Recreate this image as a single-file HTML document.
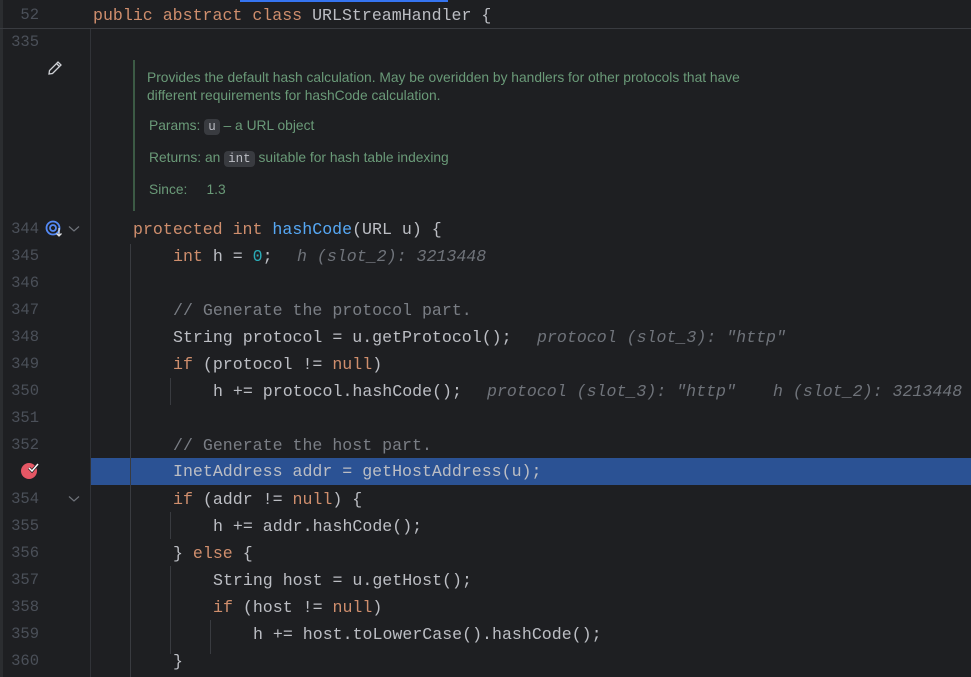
<!DOCTYPE html>
<html><head><meta charset="utf-8"><style>
body{margin:0;width:971px;height:677px;background:#1e1f22;overflow:hidden;position:relative;font-family:"Liberation Mono",monospace;}
.l{position:absolute;left:0;width:971px;height:27px;line-height:27px;font-size:16.6px;color:#bcbec4;white-space:pre;}
.n{position:absolute;left:0;width:39px;text-align:right;color:#4b5059;font-size:15.5px;}
.c{position:absolute;left:93px;}
.k{color:#cf8e6d}.f{color:#56a8f5}.num{color:#2aacb8}.cm{color:#7a7e85}
.h{position:absolute;font-style:italic;color:#6f737a;}
.g{position:absolute;width:1px;background:#393b40;}
.doc{position:absolute;left:147px;font-family:"Liberation Sans",sans-serif;font-size:13.8px;color:#6a9a78;white-space:nowrap;}
.tag{background:#393b40;color:#bcbec4;border-radius:4px;padding:1px 4px;font-family:"Liberation Mono",monospace;font-size:12.5px;}
</style></head><body>
<div style="position:absolute;left:0;top:0;width:3px;height:677px;background:#2b2d30"></div>
<div style="position:absolute;left:90px;top:29px;width:1px;height:648px;background:#313338"></div>
<div style="position:absolute;left:240px;top:0;width:208px;height:2px;background:#3574f0"></div>
<div class="l" style="top:2px;"><span class="n">52</span><span class="c"><span class="k">public abstract class</span> URLStreamHandler {</span></div>
<div style="position:absolute;left:0;top:28px;width:971px;height:1px;background:#393b40"></div>
<div class="l" style="top:29px;"><span class="n">335</span></div>
<svg style="position:absolute;left:46px;top:59px" width="18" height="18" viewBox="0 0 18 18"><path d="M3 15 L3.5 11.5 L12 3 L15 6 L6.5 14.5 Z M10.5 4.5 L13.5 7.5" fill="none" stroke="#cfd1d6" stroke-width="1.3"/></svg>
<div style="position:absolute;left:133px;top:60px;width:2px;height:151px;background:#3c5a45"></div>
<div class="doc" style="top:69px;line-height:18px;">Provides the default hash calculation. May be overidden by handlers for other protocols that have<br>different requirements for hashCode calculation.</div>
<div class="doc" style="top:118px;left:149px">Params: <span class="tag">u</span> – a URL object</div>
<div class="doc" style="top:150px;left:149px">Returns: an <span class="tag">int</span> suitable for hash table indexing</div>
<div class="doc" style="top:182px;left:149px">Since: &nbsp;&nbsp;&nbsp;&nbsp;1.3</div>
<div style="position:absolute;left:91px;top:458px;width:880px;height:27px;background:#2b5294"></div>
<div class="g" style="left:130px;top:244px;height:433px"></div>
<div class="g" style="left:170px;top:378px;height:27px"></div>
<div class="g" style="left:170px;top:512px;height:27px"></div>
<div class="g" style="left:170px;top:566px;height:88px"></div>
<div class="g" style="left:210px;top:620px;height:34px"></div>
<svg style="position:absolute;left:45px;top:220px" width="22" height="18" viewBox="0 0 22 18"><circle cx="8" cy="8" r="6.5" fill="none" stroke="#548af7" stroke-width="1.8"/><circle cx="8" cy="8" r="3" fill="none" stroke="#548af7" stroke-width="1.8"/><path d="M14 8 V16 M11.5 13.5 L14 16 L16.5 13.5" fill="none" stroke="#dfe1e5" stroke-width="1.3"/></svg>
<svg style="position:absolute;left:68px;top:225px" width="12" height="8"><path d="M1 1.5 L6 6 L11 1.5" fill="none" stroke="#6f737a" stroke-width="1.2"/></svg>
<svg style="position:absolute;left:68px;top:495px" width="12" height="8"><path d="M1 1.5 L6 6 L11 1.5" fill="none" stroke="#6f737a" stroke-width="1.2"/></svg>
<svg style="position:absolute;left:20px;top:461px" width="20" height="20"><circle cx="9" cy="10" r="8" fill="#e55765"/><path d="M9 7 L12 10 L18 3" fill="none" stroke="#1e1f22" stroke-width="3"/><path d="M9 7 L12 10 L18 3" fill="none" stroke="#fff" stroke-width="1.5"/></svg>
<div class="l" style="top:216px"><span class="n">344</span><span class="c" style="left:133px"><span class="k">protected int</span> <span class="f">hashCode</span>(URL u) {</span></div>
<div class="l" style="top:243px"><span class="n">345</span><span class="c" style="left:173px"><span class="k">int</span> h = <span class="num">0</span>;</span><span class="h" style="left:297px">h (slot_2): 3213448</span></div>
<div class="l" style="top:270px"><span class="n">346</span></div>
<div class="l" style="top:297px"><span class="n">347</span><span class="c cm" style="left:173px">// Generate the protocol part.</span></div>
<div class="l" style="top:324px"><span class="n">348</span><span class="c" style="left:173px">String protocol = u.getProtocol();</span><span class="h" style="left:537px">protocol (slot_3): "http"</span></div>
<div class="l" style="top:351px"><span class="n">349</span><span class="c" style="left:173px"><span class="k">if</span> (protocol != <span class="k">null</span>)</span></div>
<div class="l" style="top:378px"><span class="n">350</span><span class="c" style="left:213px">h += protocol.hashCode();</span><span class="h" style="left:487px">protocol (slot_3): "http"</span><span class="h" style="left:773px">h (slot_2): 3213448</span></div>
<div class="l" style="top:405px"><span class="n">351</span></div>
<div class="l" style="top:432px"><span class="n">352</span><span class="c cm" style="left:173px">// Generate the host part.</span></div>
<div class="l" style="top:458px"><span class="c" style="left:173px">InetAddress addr = getHostAddress(u);</span></div>
<div class="l" style="top:486px"><span class="n">354</span><span class="c" style="left:173px"><span class="k">if</span> (addr != <span class="k">null</span>) {</span></div>
<div class="l" style="top:513px"><span class="n">355</span><span class="c" style="left:213px">h += addr.hashCode();</span></div>
<div class="l" style="top:540px"><span class="n">356</span><span class="c" style="left:173px">} <span class="k">else</span> {</span></div>
<div class="l" style="top:567px"><span class="n">357</span><span class="c" style="left:213px">String host = u.getHost();</span></div>
<div class="l" style="top:594px"><span class="n">358</span><span class="c" style="left:213px"><span class="k">if</span> (host != <span class="k">null</span>)</span></div>
<div class="l" style="top:621px"><span class="n">359</span><span class="c" style="left:253px">h += host.toLowerCase().hashCode();</span></div>
<div class="l" style="top:648px"><span class="n">360</span><span class="c" style="left:173px">}</span></div>
</body></html>
